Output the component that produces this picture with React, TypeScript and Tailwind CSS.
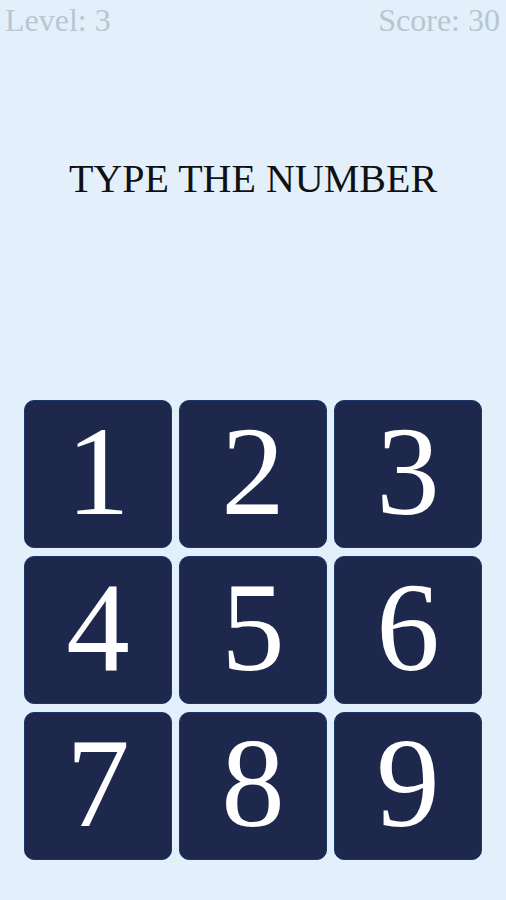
export default function App() {
  const keys = [1, 2, 3, 4, 5, 6, 7, 8, 9];

  return (
    <div
      className="min-h-[900px] w-full bg-[#e3f0fc] flex flex-col"
      style={{ fontFamily: '"Liberation Serif", "Times New Roman", serif' }}
    >
      <div className="flex justify-between pl-[5px] pr-[6px] pt-[2px] text-[32px] leading-[37px] text-[#b9c5d1]">
        <span>Level: 3</span>
        <span>Score: 30</span>
      </div>

      <h1 className="mt-[117px] text-center text-[40px] leading-[46px] text-[#111111]">
        TYPE THE NUMBER
      </h1>

      <div className="mt-[198px] mx-[24px] grid grid-cols-3 gap-x-[7px] gap-y-[8px]">
        {keys.map((k) => (
          <button
            key={k}
            className="h-[148px] rounded-[10px] bg-[#1e284c] border border-[#1c3766] text-white text-[127px] leading-none flex items-center justify-center"
          >
            <span className="-mt-[6px]">{k}</span>
          </button>
        ))}
      </div>
    </div>
  );
}
